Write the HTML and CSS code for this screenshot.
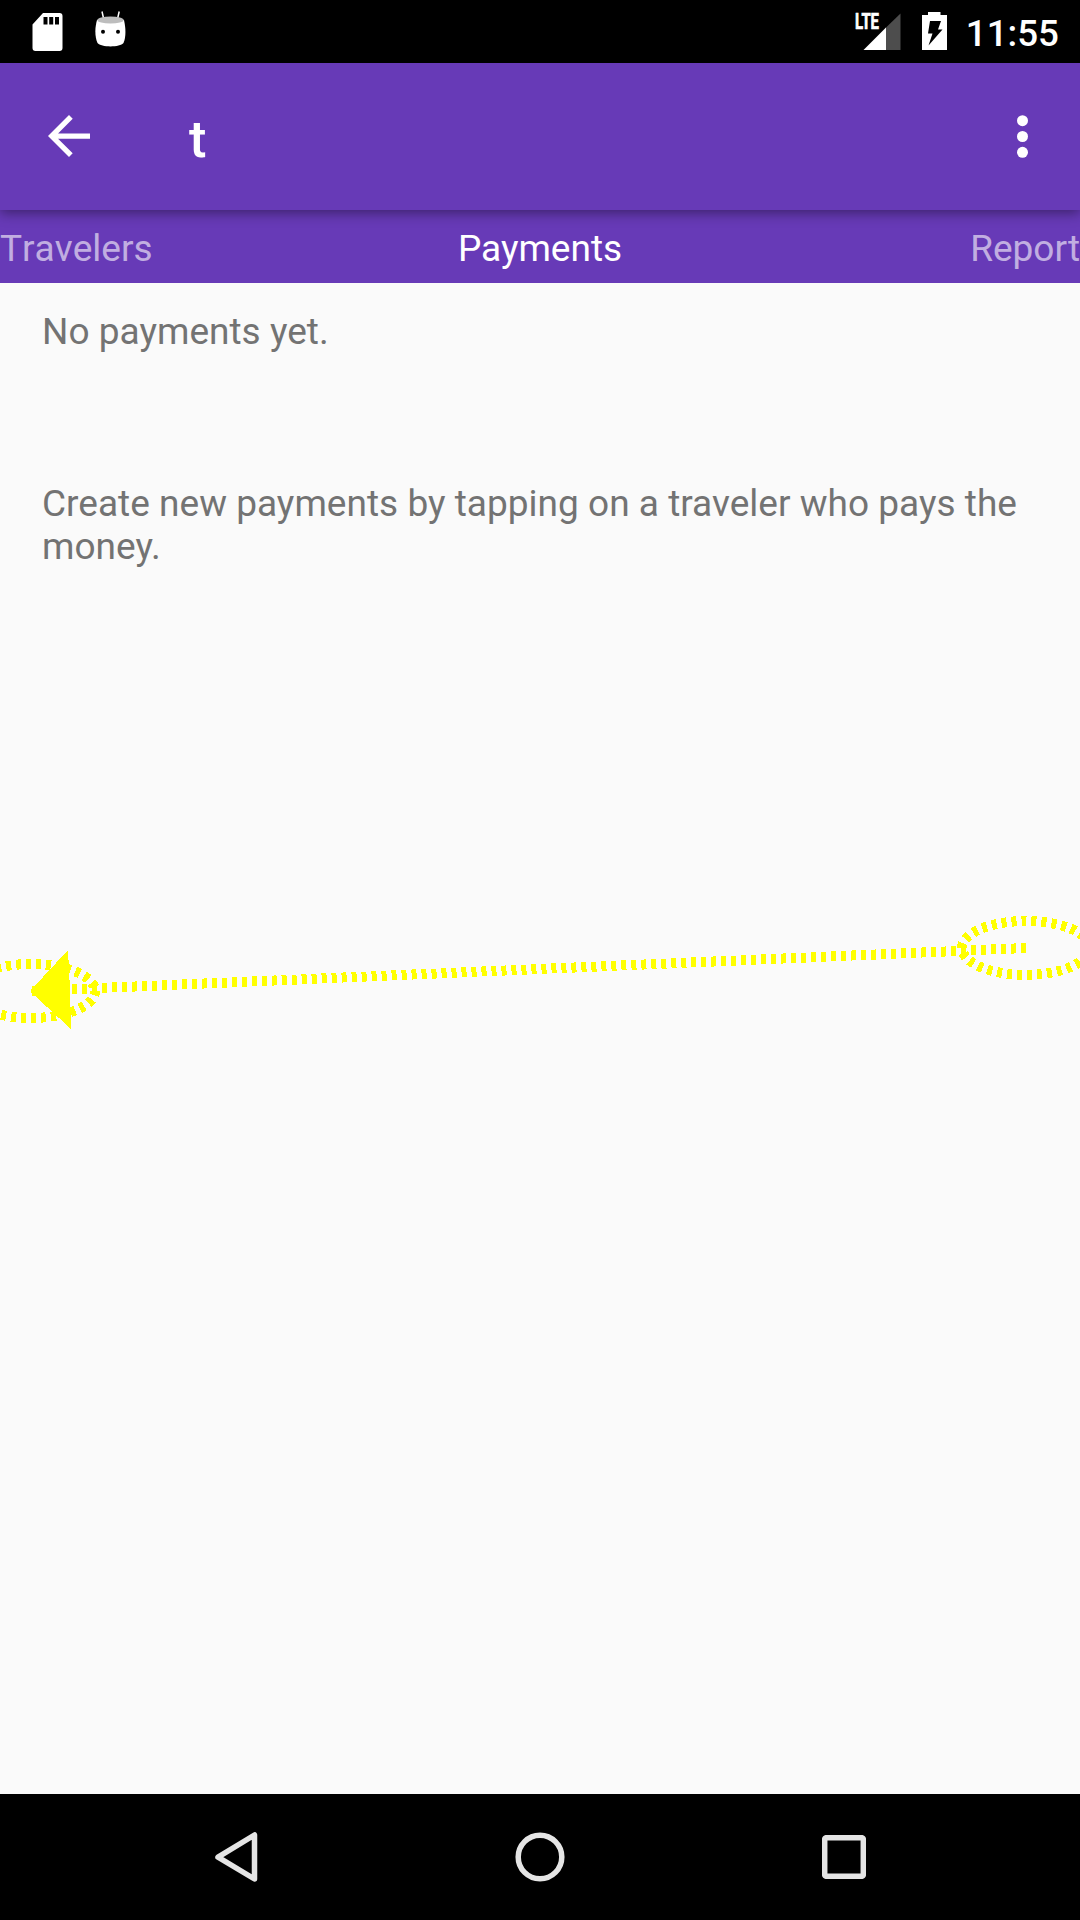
FILE: index.html
```html
<!DOCTYPE html>
<html lang="en">
<head>
<meta charset="utf-8">
<title>Payments</title>
<link rel="stylesheet" href="styles.css">
</head>
<body>
<div class="screen">
  <header class="status-bar">
    <div class="notifications">
      <svg class="sd-icon" width="31" height="38" viewBox="0 0 31 38"><path fill="#fff" fill-rule="evenodd" d="M11 0H27.500Q30.500 0 30.500 3V35Q30.500 38 27.500 38H3.500Q.5 38 .5 35V11.500ZM11.500 4V11.500H15.500V4ZM17.200 4V11.500H21.200V4ZM23 4V11.500H27V4Z"/></svg>
      <svg class="robot-icon" width="32" height="37" viewBox="0 0 32 37"><path stroke="#fff" stroke-width="1.500" d="M7 .5L8.700 8M24.200 .5L22.500 8"/><path fill="#fff" d="M2 9C-.5 18 0 26 2.500 32C6 36.500 25 36.500 28.500 32C31 26 31 18 29 9Z"/><ellipse cx="15.500" cy="9" rx="13.200" ry="3.600" fill="#bdbdbd"/><circle cx="8" cy="20.700" r="2"/><circle cx="23" cy="20.700" r="2"/></svg>
    </div>
    <div class="system">
      <svg class="signal-icon" width="46" height="38" viewBox="0 0 46 38"><path fill="#4d4d4d" d="M45.500 .5V37H30V15.500Z"/><path fill="#fff" d="M8.500 37L31 14.500V37Z"/><text class="lte" x="0" y="16.300" textLength="24" lengthAdjust="spacingAndGlyphs">LTE</text></svg>
      <svg class="battery-icon" width="25" height="38" viewBox="0 0 25 38"><path fill="#fff" d="M0 3H6V0H18.500V3H25V38H0Z"/><path d="M8 9H19L16 17.500H20.500L6.500 33.500L10.500 21.500H6Z"/></svg>
      <span class="clock">11:55</span>
    </div>
  </header>
  <div class="toolbar">
    <svg class="back-icon" width="42" height="42" viewBox="4 4 16 16"><path fill="#fff" d="M20 11H7.830l5.590-5.590L12 4l-8 8 8 8 1.410-1.410L7.830 13H20v-2z"/></svg>
    <h1 class="title">t</h1>
    <svg class="more-icon" width="11" height="43" viewBox="0 0 11 43"><g fill="#fff"><circle cx="5.500" cy="5.700" r="5.500"/><circle cx="5.500" cy="21.500" r="5.500"/><circle cx="5.500" cy="37.300" r="5.500"/></g></svg>
  </div>
  <nav class="tabs">
    <span class="tab first">Travelers</span>
    <span class="tab active">Payments</span>
    <span class="tab last">Report</span>
  </nav>
  <main class="content">
    <p class="empty">No payments yet.</p>
    <p>Create new payments by tapping on a traveler who pays the money.</p>
  </main>
  <footer class="nav-bar">
    <svg class="nav-back" width="43" height="50" viewBox="0 0 43 50"><path d="M39.500 3V47L3 25.200Z"/></svg>
    <svg class="nav-home" width="50" height="50" viewBox="0 0 50 50"><circle cx="25" cy="25" r="21.800"/></svg>
    <svg class="nav-recent" width="44" height="44" viewBox="0 0 44 44"><rect x="2.700" y="2.700" width="38.600" height="38.600" rx="1.500"/></svg>
  </footer>
  <svg class="gesture" width="1080" height="110" viewBox="0 910 1080 110" shape-rendering="crispEdges">
    <path class="dash" d="M1026 948L31 991"/>
    <path class="dash" d="M1026.500 921A64 27 0 0 0 962 948"/>
    <path class="dash gap-first" d="M1027 975A64 27 0 0 1 962 948"/>
    <path class="dash gap-first" d="M1026.500 921A64 27 0 0 1 1090 948"/>
    <path class="dash" d="M1027 975A64 27 0 0 0 1089 948"/>
    <path class="dash gap-first" d="M31 964A64 27 0 0 1 95 991"/>
    <path class="dash" d="M31 1018A64 27 0 0 0 95 991"/>
    <path class="dash" d="M31 964A64 27 0 0 0 -33 991"/>
    <path class="dash gap-first" d="M31 1018A64 27 0 0 1 -33 991"/>
    <path fill="#ff0" d="M31 990L68 950L70 990L71 1029L35 996H32Z"/>
  </svg>
</div>
</body>
</html>
```
FILE: styles.css
```css
* { box-sizing: border-box; }
body { margin: 0; }
.screen {
  position: relative;
  display: flex;
  flex-direction: column;
  width: 1080px;
  height: 1920px;
  overflow: hidden;
  background: #fafafa;
  font-family: Roboto, "Noto Sans", sans-serif;
  font-size: 37px;
  line-height: 43px;
}
svg { display: block; flex: none; }
.status-bar {
  display: flex;
  justify-content: space-between;
  height: 63px;
  background: #000;
  color: #fff;
}
.notifications { display: flex; gap: 32px; padding: 13px 0 0 32px; }
.robot-icon { margin-top: -2px; }
.system { display: flex; padding: 12px 21px 0 0; }
.signal-icon { margin: 1px 21px 0 0; overflow: visible; }
.lte { fill: #fff; stroke: #fff; stroke-width: .7px; font: 700 22px Roboto, sans-serif; }
.battery-icon { margin-right: 19px; }
.clock { font-size: 36.75px; font-weight: 500; }
.toolbar {
  position: relative;
  display: flex;
  align-items: center;
  height: 147px;
  padding: 0 52px 0 48px;
  background: #673ab7;
  color: #fff;
  box-shadow: 0 3px 12px rgba(0, 0, 0, .42);
}
.back-icon { margin: -1px 0 0 -.5px; }
.title { flex: 1; margin: 4px 0 0 99.5px; font-size: 52.5px; font-weight: 500; line-height: 62px; }
.tabs {
  display: grid;
  grid-template-columns: 1fr auto 1fr;
  height: 73px;
  padding-top: 17px;
  background: #673ab7;
  color: rgba(255, 255, 255, .6);
}
.first { font-kerning: none; }
.active { color: #fff; }
.last { text-align: right; }
.content { flex: 1; padding: 27px 42px; color: #737373; }
.content p { margin: 0; letter-spacing: .02px; }
.content .empty { margin-bottom: 129px; }
.nav-bar { display: flex; align-items: center; height: 126px; padding-left: 215px; background: #000; }
.nav-bar svg { fill: none; stroke: #e5e5e5; stroke-width: 5.5; stroke-linejoin: round; }
.nav-home { margin-left: 257px; }
.nav-recent { margin-left: 257px; }
.gesture { position: absolute; left: 0; top: 910px; overflow: visible; }
.dash { fill: none; stroke: #ff0; stroke-width: 10; stroke-dasharray: 5 5; }
.gap-first { stroke-dashoffset: 5; }
```
